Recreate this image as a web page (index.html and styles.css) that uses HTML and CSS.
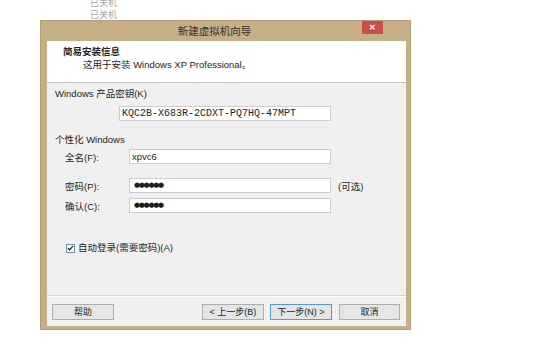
FILE: index.html
```html
<!DOCTYPE html>
<html lang="zh-CN">
  <head>
    <meta charset="UTF-8" />
    <title>新建虚拟机向导</title>
    <link rel="stylesheet" href="styles.css">
  </head>
  <body>
    <ul class="vm-list">
      <li>已关机</li>
      <li>已关机</li>
    </ul>

    <div class="window">
      <div class="title-bar">
        <div class="title">新建虚拟机向导</div>
        <button class="close-btn">✕</button>
      </div>

      <div class="content">
        <div class="header">
          <div class="header-title">简易安装信息</div>
          <div class="header-desc">这用于安装 Windows XP Professional。</div>
        </div>

        <div class="body">
          <div class="group-label">Windows 产品密钥(K)</div>
          <div class="field key-field">KQC2B-X683R-2CDXT-PQ7HQ-47MPT</div>

          <div class="group-label personal">个性化 Windows</div>
          <div class="row name-row">
            <span class="row-label">全名(F):</span>
            <div class="field">xpvc6</div>
          </div>
          <div class="row pwd-row">
            <span class="row-label">密码(P):</span>
            <div class="field dots">●●●●●●</div>
            <span class="hint">(可选)</span>
          </div>
          <div class="row confirm-row">
            <span class="row-label">确认(C):</span>
            <div class="field dots">●●●●●●</div>
          </div>

          <label class="check-row">
            <span class="checkbox">
              <svg width="8" height="8" viewBox="0 0 8 8">
                <path d="M1.2 4.2 L3.1 6.1 L6.9 1.6" fill="none" stroke="#1e1e1e" stroke-width="1.5" />
              </svg>
            </span>
            自动登录(需要密码)(A)
          </label>
        </div>

        <div class="footer">
          <button class="btn">帮助</button>
          <div class="spacer"></div>
          <button class="btn">&lt; 上一步(B)</button>
          <button class="btn btn-default">下一步(N) &gt;</button>
          <button class="btn btn-cancel">取消</button>
        </div>
      </div>
    </div>
  </body>
</html>
```

FILE: styles.css
```css
body {
  margin: 0;
  background-color: #fff;
  font-family: "Liberation Sans", "Noto Sans CJK SC", sans-serif;
  font-size: 9.5px;
  color: #1e1e1e;
}

.vm-list {
  list-style: none;
  margin: -3px 0 0 0;
  padding: 0 0 0 90px;
  color: #a8a8a8;
  font-size: 9px;
  line-height: 12px;
  height: 23px;
}

.window {
  margin-left: 40px;
  width: 369px;
  height: 308px;
  border: 1px solid #b59d74;
  background-color: #c6ae86;
  display: flex;
  flex-direction: column;
}

.title-bar {
  height: 20px;
  display: flex;
  align-items: flex-start;
}
.title {
  flex: 1;
  padding-left: 26px;
  text-align: center;
  font-size: 10.5px;
  line-height: 20px;
  color: #3a3226;
}
.close-btn {
  width: 21px;
  height: 13px;
  margin-right: 27px;
  padding: 0;
  border: none;
  background-color: #c84f4f;
  color: #fff;
  font-size: 8px;
  font-weight: bold;
  line-height: 13px;
}

.content {
  flex: 1;
  margin: 0 4px 3px 6px;
  background-color: #f0f0f0;
  display: flex;
  flex-direction: column;
}

.header {
  background-color: #fff;
  border-bottom: 1px solid #c4c4c4;
  padding-left: 16px;
  box-sizing: border-box;
  height: 42px;
}
.header-title {
  font-weight: bold;
  line-height: 12px;
  margin-top: 5px;
}
.header-desc {
  padding-left: 20px;
  line-height: 12px;
  margin-top: 1px;
}

.body {
  flex: 1;
  padding-left: 8px;
  border-bottom: 1px solid #d2d2d2;
}

.group-label {
  line-height: 12px;
  margin-top: 5px;
}
.group-label.personal {
  margin-top: 13px;
}

.field {
  box-sizing: border-box;
  width: 202px;
  height: 15px;
  background-color: #fff;
  border: 1px solid #cdcdcd;
  padding-left: 2px;
  line-height: 13px;
  white-space: nowrap;
}
.key-field {
  width: 212px;
  margin: 6px 0 0 64px;
  font-family: "Liberation Mono", monospace;
  font-size: 10px;
}

.row {
  display: flex;
  align-items: center;
  height: 15px;
}
.row-label {
  width: 74px;
  padding-left: 10px;
  box-sizing: border-box;
}
.name-row {
  margin-top: 3px;
}
.pwd-row {
  margin-top: 14px;
}
.confirm-row {
  margin-top: 5px;
}
.dots {
  font-family: "DejaVu Sans", sans-serif;
  font-size: 7px;
  letter-spacing: -1.3px;
  padding-left: 4px;
}
.hint {
  margin-left: 7px;
}

.check-row {
  display: flex;
  align-items: center;
  gap: 3px;
  margin: 29px 0 0 11px;
  line-height: 12px;
}
.checkbox {
  box-sizing: border-box;
  width: 9px;
  height: 9px;
  border: 1px solid #6d8fc0;
  background-color: #fff;
  display: flex;
  align-items: center;
  justify-content: center;
}
.checkbox svg {
  display: block;
}

.footer {
  height: 30px;
  border-top: 1px solid #fff;
  box-sizing: border-box;
  display: flex;
  align-items: center;
  gap: 6px;
  padding: 0 6px 0 5px;
}
.spacer {
  flex: 1;
}
.btn {
  box-sizing: border-box;
  width: 62px;
  height: 16px;
  padding: 0;
  border: 1px solid #adadad;
  background-color: #e5e5e5;
  font-family: inherit;
  font-size: 9px;
  color: #1e1e1e;
}
.btn-default {
  border-color: #4f9ad8;
}
.btn-cancel {
  width: 61px;
  margin-left: 1px;
}
```
